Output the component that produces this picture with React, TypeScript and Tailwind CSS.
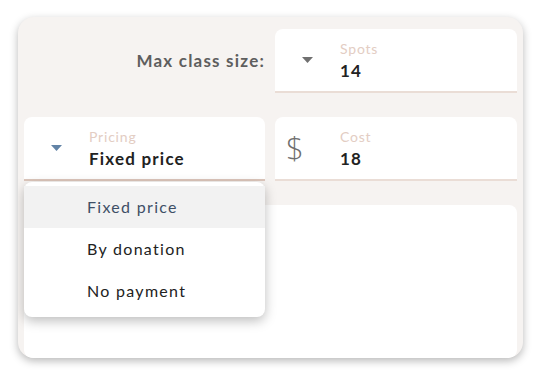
import React from "react";

const font = { fontFamily: "Lato, 'Noto Sans', sans-serif" };

function Arrow({ color }: { color: string }) {
  return (
    <svg width="11" height="6" viewBox="0 0 11 6">
      <path d="M0 0 L11 0 L5.5 6 Z" fill={color} />
    </svg>
  );
}

function TextBlock({ label, value }: { label: string; value: string }) {
  return (
    <div className="flex flex-col pt-[11px]">
      <div className="text-[14px] leading-[17px] text-[#e3cdc3] tracking-[0.8px]">{label}</div>
      <div className="mt-[3px] text-[17px] leading-[22px] font-bold text-[#222222] tracking-[1.2px]">{value}</div>
    </div>
  );
}

function Field({
  icon,
  label,
  value,
  border,
}: {
  icon: React.ReactNode;
  label: string;
  value: string;
  border: string;
}) {
  return (
    <div className={`flex h-[64px] items-stretch rounded-t-lg bg-white border-b-2 ${border}`}>
      <div className="w-[65px] flex items-center justify-center shrink-0">{icon}</div>
      <TextBlock label={label} value={value} />
    </div>
  );
}

export default function App() {
  return (
    <div className="w-[542px] h-[378px] bg-white pt-[17px] pl-[18px]" style={font}>
      <div className="w-[505px] h-[341px] rounded-2xl bg-[#f6f3f1] overflow-hidden shadow-[0_3px_8px_rgba(0,0,0,0.28)] flex flex-col pt-[12px] px-[6px]">
        <div className="grid grid-cols-[241px_242px] gap-x-[10px]">
          <div className="flex items-center justify-end pb-[1px]">
            <span className="text-[17px] font-bold text-[#5e5e5e] tracking-[1.2px]">Max class size:</span>
          </div>
          <Field
            icon={<Arrow color="#707070" />}
            label="Spots"
            value="14"
            border="border-[#eaddd6]"
          />
        </div>
        <div className="grid grid-cols-[241px_242px] gap-x-[10px] mt-[24px]">
          <div className="relative">
            <Field
              icon={<Arrow color="#6283a6" />}
              label="Pricing"
              value="Fixed price"
              border="border-[#dcc6bb]"
            />
            <div className="absolute left-0 right-0 top-[65px] z-10 rounded-lg bg-white pt-[4px] pb-[5px] shadow-[0_4px_12px_rgba(0,0,0,0.26)]">
              <div className="h-[42px] flex items-center pl-[63px] bg-[#f2f2f2] text-[16px] font-normal text-[#3e4f66] tracking-[1.3px]">
                Fixed price
              </div>
              <div className="h-[42px] flex items-center pl-[63px] text-[16px] font-normal text-[#222222] tracking-[1.3px]">
                By donation
              </div>
              <div className="h-[42px] flex items-center pl-[63px] text-[16px] font-normal text-[#222222] tracking-[1.3px]">
                No payment
              </div>
            </div>
          </div>
          <div className="flex h-[64px] items-stretch rounded-t-lg bg-white border-b-2 border-[#eaddd6]">
            <div className="w-[65px] flex items-center shrink-0 pl-[11px]">
              <span
                className="text-[31px] leading-none text-[#6e6e6e] pb-[2px]"
                style={{ fontFamily: "'Open Sans', sans-serif", fontWeight: 300 }}
              >
                $
              </span>
            </div>
            <TextBlock label="Cost" value="18" />
          </div>
        </div>
        <div className="mt-[24px] flex-1 rounded-lg bg-white"></div>
      </div>
    </div>
  );
}
